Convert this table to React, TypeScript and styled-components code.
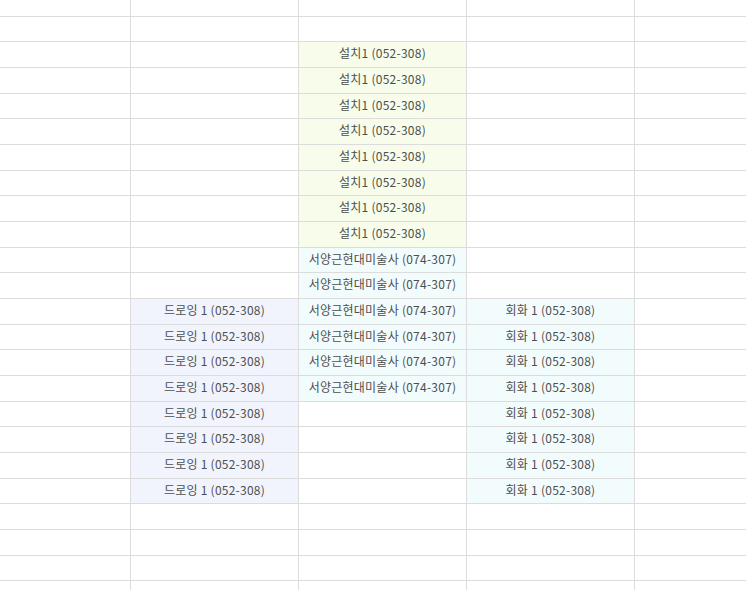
import React from "react";
import styled, { createGlobalStyle } from "styled-components";

const Global = createGlobalStyle`
  html, body { margin: 0; padding: 0; background: #ffffff; overflow: hidden; }
  body { font-family: "Noto Sans CJK KR", "Noto Sans", sans-serif; }
`;

type Tone = "none" | "green" | "cyan" | "blue";

const tones: Record<Tone, string> = {
  none: "#ffffff",
  green: "#f7fdea",
  cyan: "#f3fcfd",
  blue: "#f1f4fd",
};

const Viewport = styled.div`
  width: 746px;
  height: 590px;
  overflow: hidden;
`;

const Sheet = styled.div`
  display: grid;
  grid-template-columns: 131px 168px 168px 168px 130px;
  grid-template-rows: 17px repeat(7, 25px 26px 26px) 25px 26px;
`;

const Cell = styled.div<{ $tone: Tone }>`
  box-sizing: border-box;
  border-right: 1px solid #dcdcdc;
  border-bottom: 1px solid #dcdcdc;
  background: ${(p) => tones[p.$tone]};
  display: flex;
  align-items: center;
  justify-content: center;
  padding-bottom: 3px;
  font-size: 12px;
  line-height: 14px;
  color: #4e4e4e;
  white-space: nowrap;
  overflow: hidden;
  letter-spacing: 0.25px;
`;

type CellData = { text?: string; tone: Tone };

const TOTAL_ROWS = 24;

function buildRow(r: number): CellData[] {
  const cols: CellData[] = [
    { tone: "none" },
    { tone: "none" },
    { tone: "none" },
    { tone: "none" },
    { tone: "none" },
  ];
  if (r >= 2 && r <= 9) cols[2] = { text: "설치1 (052-308)", tone: "green" };
  if (r >= 10 && r <= 15) cols[2] = { text: "서양근현대미술사 (074-307)", tone: "cyan" };
  if (r >= 12 && r <= 19) {
    cols[1] = { text: "드로잉 1 (052-308)", tone: "blue" };
    cols[3] = { text: "회화 1 (052-308)", tone: "cyan" };
  }
  return cols;
}

export default function App() {
  const rows = Array.from({ length: TOTAL_ROWS }, (_, r) => buildRow(r));
  return (
    <Viewport>
      <Global />
      <Sheet>
        {rows.map((row, r) =>
          row.map((c, ci) => (
            <Cell key={`${r}-${ci}`} $tone={c.tone}>
              {c.text}
            </Cell>
          ))
        )}
      </Sheet>
    </Viewport>
  );
}
